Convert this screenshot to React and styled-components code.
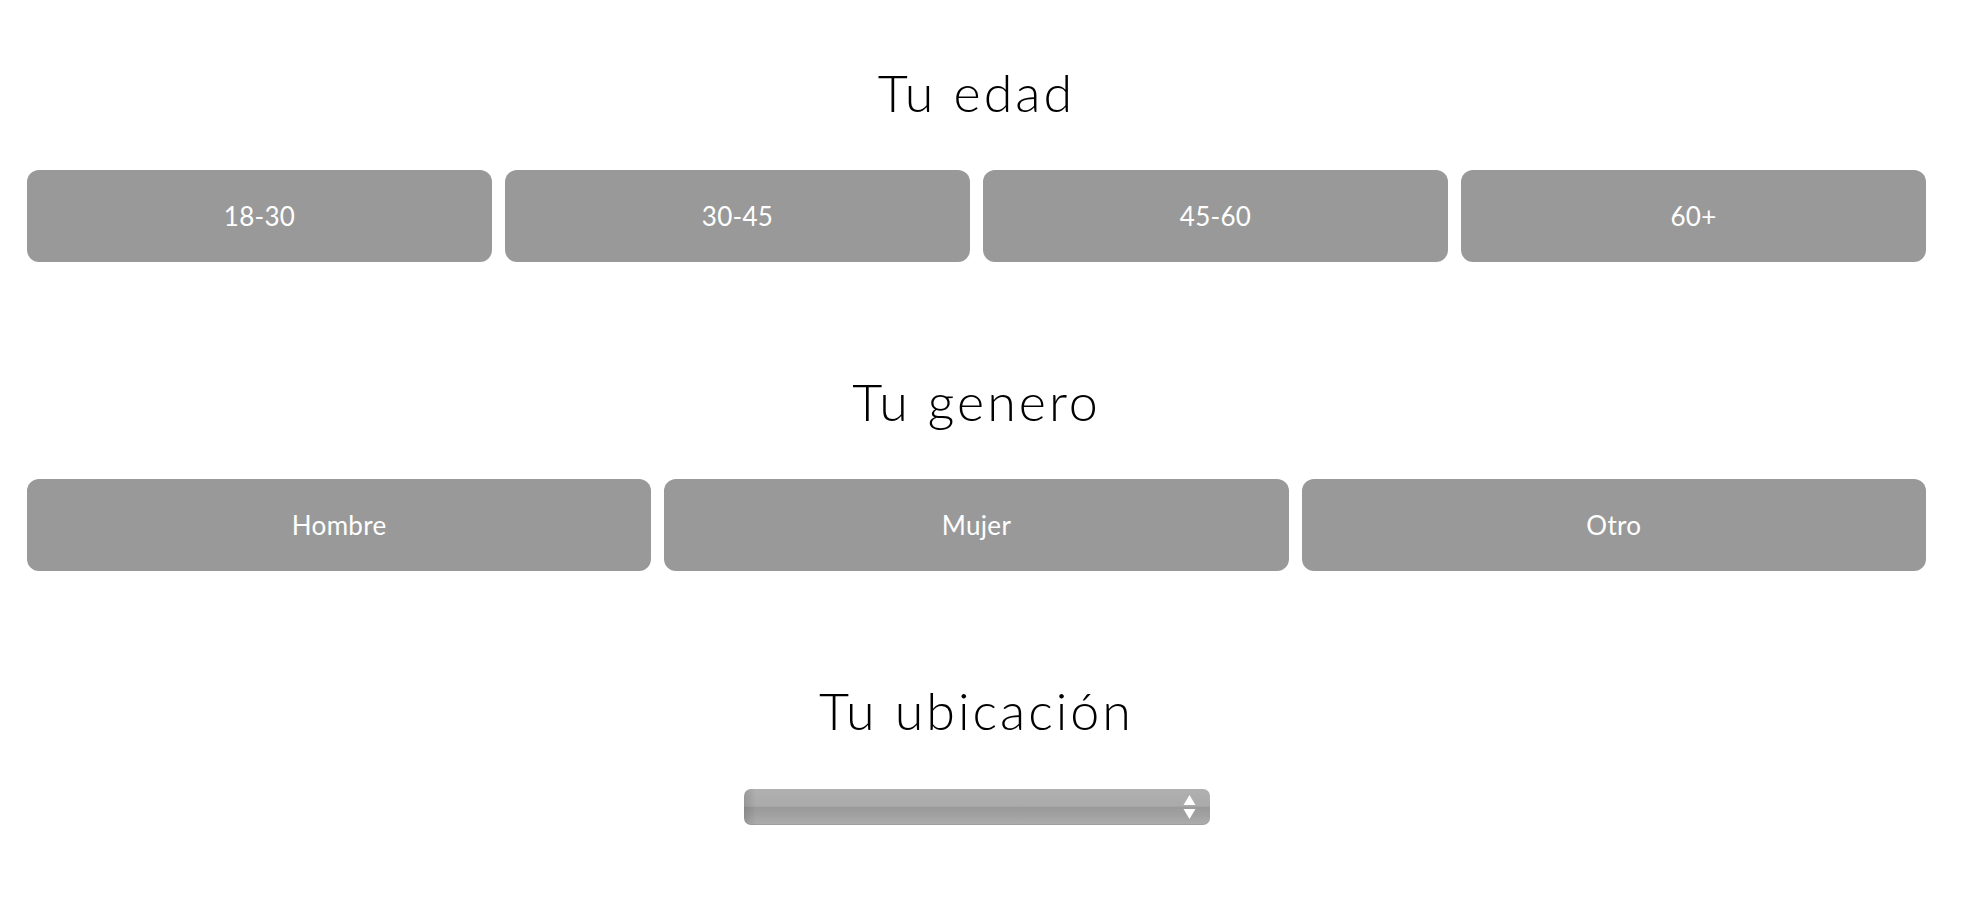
import React from "react";
import styled, { createGlobalStyle } from "styled-components";

const GlobalStyle = createGlobalStyle`
  html, body {
    margin: 0;
    padding: 0;
    background: #ffffff;
  }
  body {
    font-family: "Poppins", "Lato", "Noto Sans", sans-serif;
  }
`;

const Page = styled.form`
  display: flex;
  flex-direction: column;
  padding: 64px 62px 80px 27px;
`;

const Section = styled.section`
  display: flex;
  flex-direction: column;
  align-items: stretch;
  gap: 46px;
  & + & {
    margin-top: 111px;
  }
`;

const Title = styled.h2`
  margin: 0;
  box-sizing: border-box;
  height: 60px;
  padding-bottom: 5px;
  display: flex;
  align-items: center;
  justify-content: center;
  font-family: "Lato", "Noto Sans", sans-serif;
  font-weight: 300;
  font-size: 52px;
  letter-spacing: 3px;
  color: #000;
`;

const Options = styled.div`
  display: grid;
  grid-template-columns: repeat(${(p) => p.$cols}, 1fr);
  gap: 13px;
`;

const Option = styled.button`
  height: 92px;
  border: none;
  border-radius: 12px;
  background: #999999;
  color: #ffffff;
  font-family: "Lato", "Noto Sans", sans-serif;
  font-size: 26px;
  font-weight: 400;
  letter-spacing: 0.3px;
  cursor: pointer;
`;

const SelectWrap = styled.div`
  position: relative;
  align-self: center;
  width: 466px;
  height: 36px;
  margin-top: 1px;
`;

const Select = styled.select`
  appearance: none;
  -webkit-appearance: none;
  width: 100%;
  height: 100%;
  border: none;
  border-radius: 7px;
  background:
    linear-gradient(90deg, rgba(0, 0, 0, 0.12) 0px, rgba(0, 0, 0, 0) 12px),
    linear-gradient(
      180deg,
      #b0b0b0 0%,
      #aaaaaa 48%,
      #9a9a9a 50%,
      #a0a0a0 70%,
      #adadad 100%
    );
  box-shadow: inset 0 -1px 0 rgba(0, 0, 0, 0.08);
  color: #fff;
  font-family: "Lato", sans-serif;
  font-size: 16px;
`;

const Arrows = styled.svg`
  position: absolute;
  right: 14px;
  top: 6px;
  pointer-events: none;
`;

const ages = ["18-30", "30-45", "45-60", "60+"];
const genders = ["Hombre", "Mujer", "Otro"];

export default function App() {
  return (
    <>
      <GlobalStyle />
      <Page onSubmit={(e) => e.preventDefault()}>
        <Section>
          <Title>Tu edad</Title>
          <Options $cols={4}>
            {ages.map((a) => (
              <Option key={a} type="button">
                {a}
              </Option>
            ))}
          </Options>
        </Section>
        <Section>
          <Title>Tu genero</Title>
          <Options $cols={3}>
            {genders.map((g) => (
              <Option key={g} type="button">
                {g}
              </Option>
            ))}
          </Options>
        </Section>
        <Section>
          <Title>Tu ubicación</Title>
          <SelectWrap>
            <Select defaultValue="">
              <option value=""></option>
            </Select>
            <Arrows width="13" height="24" viewBox="0 0 13 24">
              <path d="M6.5 0 L12.5 10 L0.5 10 Z" fill="#ffffff" />
              <path d="M0.5 14 L12.5 14 L6.5 24 Z" fill="#ffffff" />
            </Arrows>
          </SelectWrap>
        </Section>
      </Page>
    </>
  );
}
